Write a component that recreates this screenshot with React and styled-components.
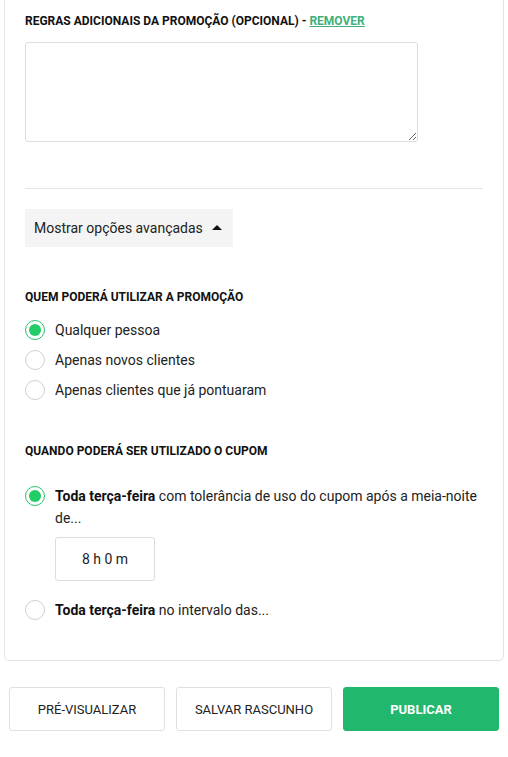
import React from 'react'
import styled, { createGlobalStyle } from 'styled-components'

const Global = createGlobalStyle`
  body {
    margin: 0;
    background: #fff;
    font-family: Roboto, "Liberation Sans", Arial, sans-serif;
    color: #222;
  }
`

const whoOptions = [
  { id: 1, label: 'Qualquer pessoa', checked: true },
  { id: 2, label: 'Apenas novos clientes' },
  { id: 3, label: 'Apenas clientes que já pontuaram' },
]

const App = () => {
  return (
    <Page>
      <Global />
      <Card>
        <Heading>
          Regras adicionais da promoção (opcional) - <RemoveLink href="#">Remover</RemoveLink>
        </Heading>
        <RulesArea />
        <Divider />
        <ToggleButton>
          Mostrar opções avançadas
          <Caret />
        </ToggleButton>

        <Heading $top={42}>Quem poderá utilizar a promoção</Heading>
        <OptionList>
          {whoOptions.map((o) => (
            <OptionRow key={o.id}>
              <Radio $checked={o.checked} />
              <span>{o.label}</span>
            </OptionRow>
          ))}
        </OptionList>

        <Heading $top={38}>Quando poderá ser utilizado o cupom</Heading>
        <WhenOption $top={26}>
          <Radio $checked />
          <div>
            <OptionText>
              <b>Toda terça-feira</b> com tolerância de uso do cupom após a meia-noite de...
            </OptionText>
            <TimeBox>8 h 0 m</TimeBox>
          </div>
        </WhenOption>
        <WhenOption $top={18}>
          <Radio />
          <OptionText>
            <b>Toda terça-feira</b> no intervalo das...
          </OptionText>
        </WhenOption>
      </Card>

      <Actions>
        <ActionButton>Pré-visualizar</ActionButton>
        <ActionButton>Salvar rascunho</ActionButton>
        <ActionButton $primary>Publicar</ActionButton>
      </Actions>
    </Page>
  )
}

export default App

const Page = styled.div`
  width: 508px;
  height: 757px;
  overflow: hidden;
`
const Card = styled.div`
  margin: -10px 4px 0 4px;
  padding: 22px 20px 39px 20px;
  border: 1px solid #e3e3e3;
  border-radius: 0 0 5px 5px;
  background: #fff;
`
const Heading = styled.div`
  margin-top: ${(p) => (p.$top ? p.$top + 'px' : '0')};
  font-size: 12px;
  line-height: 16px;
  font-weight: 700;
  text-transform: uppercase;
  color: #111;
`
const RemoveLink = styled.a`
  color: #3fb07a;
  text-decoration: underline;
`
const RulesArea = styled.textarea`
  display: block;
  box-sizing: border-box;
  margin-top: 13px;
  width: 393px;
  height: 100px;
  border: 1px solid #ddd;
  border-radius: 3px;
  font-family: inherit;
  outline: none;
`
const Divider = styled.hr`
  margin: 46px 0 0 0;
  border: none;
  border-top: 1px solid #e5e5e5;
`
const ToggleButton = styled.button`
  display: flex;
  align-items: center;
  gap: 9px;
  margin-top: 20px;
  height: 38px;
  padding: 0 0 1px 9px;
  width: 208px;
  border: none;
  background: #f4f4f4;
  font-family: inherit;
  font-size: 14px;
  color: #222;
  cursor: pointer;
`
const Caret = styled.span`
  width: 0;
  height: 0;
  border-left: 5px solid transparent;
  border-right: 5px solid transparent;
  border-bottom: 5px solid #111;
  margin-top: -1px;
`
const OptionList = styled.div`
  margin-top: 10px;
  display: flex;
  flex-direction: column;
`
const OptionRow = styled.label`
  display: flex;
  align-items: center;
  gap: 10px;
  height: 30px;
  font-size: 14px;
  color: #222;
`
const Radio = styled.span`
  flex: none;
  position: relative;
  box-sizing: border-box;
  width: 20px;
  height: 20px;
  border-radius: 50%;
  border: ${(p) => (p.$checked ? '1.5px solid #2bbf6e' : '1px solid #cfcfcf')};
  background: #fff;
  &::after {
    content: '';
    display: ${(p) => (p.$checked ? 'block' : 'none')};
    position: absolute;
    left: 2.5px;
    top: 2.5px;
    width: 12px;
    height: 12px;
    border-radius: 50%;
    background: #22cc66;
  }
`
const WhenOption = styled.div`
  display: flex;
  align-items: flex-start;
  gap: 10px;
  margin-top: ${(p) => p.$top}px;
  ${Radio} {
    margin-top: 1px;
  }
`
const OptionText = styled.div`
  font-size: 14px;
  line-height: 22px;
  color: #222;
  b {
    font-weight: 700;
    color: #111;
  }
`
const TimeBox = styled.div`
  margin-top: 8px;
  box-sizing: border-box;
  width: 100px;
  height: 44px;
  border: 1px solid #ddd;
  border-radius: 3px;
  display: flex;
  align-items: center;
  justify-content: center;
  font-size: 14px;
  color: #222;
`
const Actions = styled.div`
  display: grid;
  grid-template-columns: 1fr 1fr 1fr;
  gap: 11px;
  margin-top: 26px;
  padding: 0 9px 0 9px;
`
const ActionButton = styled.button`
  height: 44px;
  border-radius: 3px;
  border: 1px solid ${(p) => (p.$primary ? '#21b76c' : '#e0e0e0')};
  background: ${(p) => (p.$primary ? '#21b76c' : '#fff')};
  color: ${(p) => (p.$primary ? '#fff' : '#222')};
  font-family: inherit;
  font-size: 13px;
  font-weight: ${(p) => (p.$primary ? 700 : 400)};
  text-transform: uppercase;
  cursor: pointer;
`
